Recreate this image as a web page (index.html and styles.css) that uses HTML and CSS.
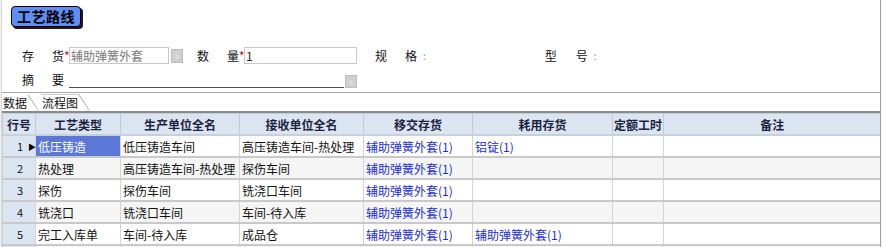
FILE: index.html
```html
<!DOCTYPE html>
<html lang="zh">
<head>
<meta charset="utf-8">
<title>工艺路线</title>
<link rel="stylesheet" href="styles.css">
</head>
<body>
<div class="page">
  <div class="title-wrap"><div class="title">工艺路线</div></div>

  <div class="form">
    <div class="frow r1">
      <span class="lbl l1">存</span><span class="lbl l2">货</span><span class="star">*</span>
      <span class="inp inv">辅助弹簧外套</span><span class="btn">&#8250;</span>
      <span class="lbl l3">数</span><span class="lbl l4">量</span><span class="star">*</span>
      <span class="inp qty">1</span>
      <span class="lbl l5">规</span><span class="lbl l6">格</span><span class="colon">:</span>
      <span class="lbl l7">型</span><span class="lbl l8">号</span><span class="colon">:</span>
    </div>
    <div class="frow r2">
      <span class="lbl l1">摘</span><span class="lbl l2">要</span>
      <span class="uline"></span><span class="btn small">&#8250;</span>
    </div>
  </div>

  <div class="tabs">
    <div class="tab active">数据</div>
    <div class="tab">流程图</div>
  </div>

  <table class="grid">
    <colgroup>
      <col class="c0"><col class="c1"><col class="c2"><col class="c3"><col class="c4"><col class="c5"><col class="c6"><col class="c7">
    </colgroup>
    <thead>
      <tr><th>行号</th><th>工艺类型</th><th>生产单位全名</th><th>接收单位全名</th><th>移交存货</th><th>耗用存货</th><th>定额工时</th><th>备注</th></tr>
    </thead>
    <tbody>
      <tr><td class="rn">1<span class="arrow">&#9654;</span></td><td class="sel">低压铸造</td><td>低压铸造车间</td><td>高压铸造车间-热处理</td><td class="lnk">辅助弹簧外套(1)</td><td class="lnk">铝锭(1)</td><td></td><td></td></tr>
      <tr class="alt"><td class="rn">2</td><td>热处理</td><td>高压铸造车间-热处理</td><td>探伤车间</td><td class="lnk">辅助弹簧外套(1)</td><td></td><td></td><td></td></tr>
      <tr><td class="rn">3</td><td>探伤</td><td>探伤车间</td><td>铣浇口车间</td><td class="lnk">辅助弹簧外套(1)</td><td></td><td></td><td></td></tr>
      <tr class="alt"><td class="rn">4</td><td>铣浇口</td><td>铣浇口车间</td><td>车间-待入库</td><td class="lnk">辅助弹簧外套(1)</td><td></td><td></td><td></td></tr>
      <tr><td class="rn">5</td><td>完工入库单</td><td>车间-待入库</td><td>成品仓</td><td class="lnk">辅助弹簧外套(1)</td><td class="lnk">辅助弹簧外套(1)</td><td></td><td></td></tr>
      <tr class="alt"><td class="rn"></td><td></td><td></td><td></td><td></td><td></td><td></td><td></td></tr>
    </tbody>
  </table>
</div>
</body>
</html>
```

FILE: styles.css
```css
html, body {
  margin: 0;
  padding: 0;
  background: #f0f0f0;
}
body {
  font-family: "Noto Sans CJK SC", "Noto Sans", sans-serif;
  font-size: 12px;
  color: #000;
}
.page {
  width: 878px;
  height: 247px;
  margin-left: 1px;
  border-left: 1px solid #d6d6d6;
  border-right: 1px solid #a0a0a0;
  background: #fff;
  overflow: hidden;
}
.title-wrap {
  padding: 6px 0 0 9px;
  height: 28px;
  box-sizing: border-box;
}
.title {
  display: inline-block;
  box-sizing: border-box;
  width: 70px;
  height: 21px;
  line-height: 19px;
  border: 1px solid #000;
  border-radius: 4px;
  background: #5e8ff5;
  box-shadow: 2px 2px 0 #1a1a1a;
  font-size: 14px;
  font-weight: bold;
  text-align: center;
  letter-spacing: 0.5px;
}
.form {
  padding-top: 19px;
  height: 65px;
  box-sizing: border-box;
  border-bottom: 1px solid #a8a8a8;
}
.frow {
  display: flex;
  align-items: center;
  height: 17px;
}
.r2 { margin-top: 7px; }
.lbl { display: inline-block; width: 12px; line-height: 17px; color: #111; }
.l1 { margin-left: 20px; }
.l2 { margin-left: 18px; }
.l3 { margin-left: 14px; }
.l4 { margin-left: 18px; }
.l5 { margin-left: 18px; }
.l6 { margin-left: 18px; }
.l7 { margin-left: 119px; }
.l8 { margin-left: 19px; }
.colon { margin-left: 6px; color: #888; font-size: 10px; }
.star { color: #e00000; font-size: 12px; width: 5px; line-height: 17px; }
.inp {
  box-sizing: border-box;
  height: 17px;
  border: 1px solid #c8c8c8;
  line-height: 15px;
  padding-left: 1px;
  font-size: 12px;
}
.inv { width: 100px; color: #777; }
.qty { width: 113px; color: #222; }
.btn {
  width: 12px;
  height: 14px;
  margin-left: 2px;
  background: #cfcfcf;
  border: 1px solid #bcbcbc;
  box-sizing: border-box;
  color: #f4f4f4;
  font-size: 11px;
  line-height: 11px;
  text-align: center;
}
.uline {
  width: 275px;
  height: 17px;
  margin-left: 5px;
  border-bottom: 1px solid #505050;
  box-sizing: border-box;
}
.btn.small { height: 13px; align-self: flex-end; margin-left: 1px; }
.tabs {
  display: flex;
  height: 17px;
  border-bottom: 2px solid #8a8a8a;
  padding-top: 1px;
  box-sizing: content-box;
}
.tab {
  height: 16px;
  line-height: 16px;
  padding: 0 12px 0 1px;
  margin-right: 2px;
  border-top: 1px solid #c8c8c8;
  clip-path: polygon(0 0, calc(100% - 10px) 0, 100% 100%, 0 100%);
  background: linear-gradient(to bottom left, transparent calc(50% - 1px), #b0b0b0 50%, transparent calc(50% + 1px)) right top / 11px 100% no-repeat, #fff;
  color: #111;
}
.tab.active { border-top-color: transparent; }
.grid {
  border-collapse: collapse;
  table-layout: fixed;
  width: 878px;
}
.c0 { width: 33px; }
.c1 { width: 85px; }
.c2 { width: 119px; }
.c3 { width: 124px; }
.c4 { width: 109px; }
.c5 { width: 140px; }
.c6 { width: 51px; }
.c7 { width: 217px; }
.grid th {
  height: 20px;
  padding: 0;
  background: #dbe5f1;
  color: #1c2340;
  font-weight: bold;
  border-top: 1px solid #c4ccd8;
  border-bottom: 2px solid #c8d0dc;
  border-left: 1px solid #c2c9d3;
  text-align: center;
  white-space: nowrap;
  overflow: hidden;
}
.grid td {
  height: 20px;
  padding: 0 0 0 2px;
  border-bottom: 2px solid #c9c9c9;
  border-left: 1px solid #d4d4d4;
  white-space: nowrap;
  overflow: hidden;
  color: #111;
}
.grid tr.alt td { background: #f5f5f5; }
.grid td.rn {
  background: #dbe5f1;
  text-align: left;
  padding-left: 14px;
  font-size: 11px;
  position: relative;
  overflow: visible;
}
.grid tr.alt td.rn { background: #dbe5f1; }
.arrow {
  position: absolute;
  left: 25px;
  top: 6px;
  font-size: 8px;
  line-height: 9px;
  color: #000;
}
.grid td.sel { background: #5b78d8; color: #fff; }
.grid td.lnk { color: #1a2cd8; }
```
